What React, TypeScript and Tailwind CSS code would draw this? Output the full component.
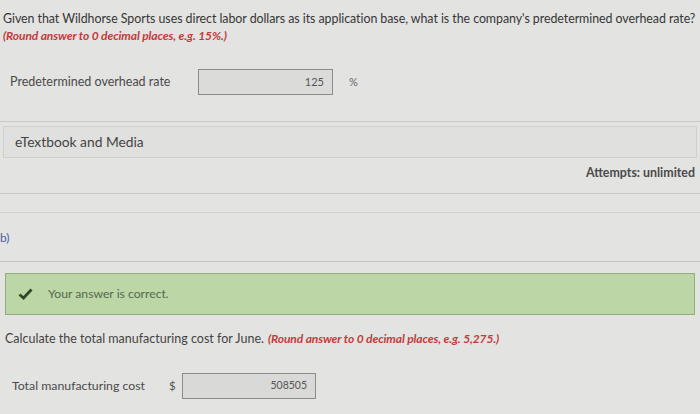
export default function App() {
  return (
    <div
      className="h-[414px] w-[700px] overflow-hidden bg-[#e3e3e1] text-[#3f3f3f]"
      style={{ fontFamily: "Lato, 'Open Sans', sans-serif" }}
    >
      <div className="px-[3px] pt-[10px]">
        <p className="whitespace-nowrap text-[12.4px] leading-[17px] tracking-[-0.05px] text-[#363636]">
          Given that Wildhorse Sports uses direct labor dollars as its application base, what is the company's predetermined overhead rate?
        </p>
        <p className="whitespace-nowrap text-[12px] leading-[17px] font-bold italic tracking-[-0.1px] text-[#c43a3a]">
          (Round answer to 0 decimal places, e.g. 15%.)
        </p>
      </div>

      <div className="mt-[25px] flex items-center pl-[10px]">
        <span className="w-[188px] text-[12.5px] leading-[16px] text-[#4a4a4a]">
          Predetermined overhead rate
        </span>
        <div className="flex h-[26px] w-[135px] items-center justify-end border border-[#8c8c8a] bg-[#dbdbd9] pr-[8px] text-[11px] text-[#555]">
          125
        </div>
        <span className="ml-[16px] text-[11px] text-[#666]">%</span>
      </div>

      <div className="mt-[26px] border-t border-[#c9c9c7]" />

      <div className="mx-[3px] mt-[4px] flex h-[32px] items-center border border-[#d0d0ce] bg-[#e0e0de] pl-[11px]">
        <span className="text-[13.8px] leading-[16px] text-[#444]">eTextbook and Media</span>
      </div>

      <div className="mt-[7px] flex justify-end pr-[5px]">
        <span className="text-[12.4px] leading-[16px] font-bold text-[#4a4a4a]">Attempts: unlimited</span>
      </div>

      <div className="mt-[12px] border-t border-[#c8c8c6]" />
      <div className="mt-[18px] border-t border-[#d2d2d0]" />

      <div className="mt-[18px] text-[12px] leading-[14px] text-[#4b5fa0]">b)</div>

      <div className="mt-[16px] border-t border-[#c6c6c4]" />

      <div className="mx-[5px] mt-[11px] flex h-[42px] items-center border border-[#91ae80] bg-[#bcd6a6] pl-[12px]">
        <svg width="15" height="12" viewBox="0 0 15 12" className="shrink-0">
          <path d="M1.5 6.5 L5.5 10 L13.5 1.5" fill="none" stroke="#2f4a28" strokeWidth="2.8" />
        </svg>
        <span className="ml-[15px] text-[12.2px] leading-[16px] text-[#56684f]">Your answer is correct.</span>
      </div>

      <div className="mt-[16px] flex items-baseline whitespace-nowrap pl-[5px] text-[12.5px] leading-[16px]">
        <span className="text-[#444]">Calculate the total manufacturing cost for June.</span>
        <span className="ml-[4px] text-[12px] font-bold italic tracking-[-0.1px] text-[#c43a3a]">
          (Round answer to 0 decimal places, e.g. 5,275.)
        </span>
      </div>

      <div className="mt-[26px] flex items-center pl-[12px]">
        <span className="w-[157px] text-[12.3px] leading-[16px] text-[#4a4a4a]">Total manufacturing cost</span>
        <span className="w-[13px] text-[11.5px] text-[#555]">$</span>
        <div className="flex h-[26px] w-[134px] items-center justify-end border border-[#8c8c8a] bg-[#d9d9d7] pr-[8px] text-[10.5px] text-[#555]">
          508505
        </div>
      </div>
    </div>
  );
}
